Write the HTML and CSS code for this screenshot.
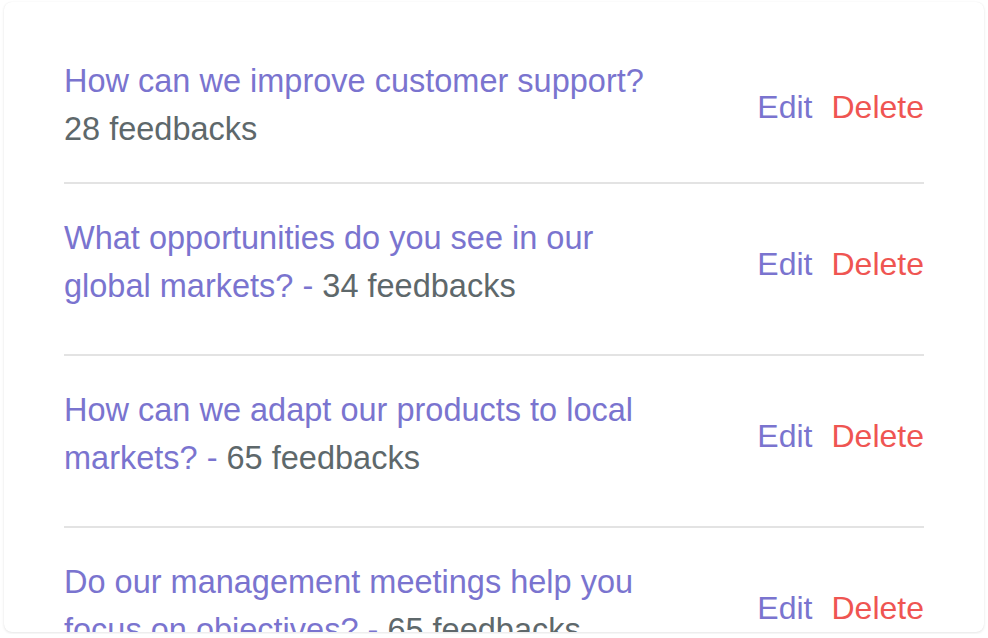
FILE: index.html
```html
<!DOCTYPE html>
<html>
<head>
<meta charset="utf-8">
<link rel="stylesheet" href="styles.css">
</head>
<body>
<div class="card">
  <div class="row first">
    <div class="text"><span class="title">How can we improve customer support?</span><br><span class="count">28 feedbacks</span></div>
    <div class="actions"><span class="edit">Edit</span><span class="delete">Delete</span></div>
  </div>
  <div class="row">
    <div class="text"><span class="title">What opportunities do you see in our global markets? - </span><span class="count">34 feedbacks</span></div>
    <div class="actions"><span class="edit">Edit</span><span class="delete">Delete</span></div>
  </div>
  <div class="row">
    <div class="text"><span class="title">How can we adapt our products to local markets? - </span><span class="count">65 feedbacks</span></div>
    <div class="actions"><span class="edit">Edit</span><span class="delete">Delete</span></div>
  </div>
  <div class="row">
    <div class="text"><span class="title">Do our management meetings help you focus on objectives? - </span><span class="count">65 feedbacks</span></div>
    <div class="actions"><span class="edit">Edit</span><span class="delete">Delete</span></div>
  </div>
</div>
</body>
</html>
```
FILE: styles.css
```css
html, body {
  margin: 0;
  padding: 0;
  background: #ffffff;
}
body {
  padding: 2px 4px;
  font-family: "Liberation Sans", Arial, Helvetica, sans-serif;
}
.card {
  box-sizing: border-box;
  width: 980px;
  height: 630px;
  overflow: hidden;
  background: #ffffff;
  border-radius: 8px;
  box-shadow: 0 1px 3px rgba(0, 0, 0, 0.10), 0 0 1px rgba(0, 0, 0, 0.06);
  padding: 42px 60px 0;
}
.row {
  display: flex;
  align-items: center;
  justify-content: space-between;
  border-bottom: 2px solid #e3e3e3;
  padding: 30px 0 44px;
}
.row.first {
  padding: 13px 0 29px;
}
.text {
  width: 600px;
  font-size: 32.5px;
  line-height: 48px;
}
.title {
  color: #7a74cf;
}
.count {
  color: #5e686b;
}
.actions {
  font-size: 32px;
  line-height: 48px;
  display: flex;
  gap: 19px;
  margin-top: 4px;
}
.edit {
  color: #7a74cf;
}
.delete {
  color: #ef5552;
}
```
